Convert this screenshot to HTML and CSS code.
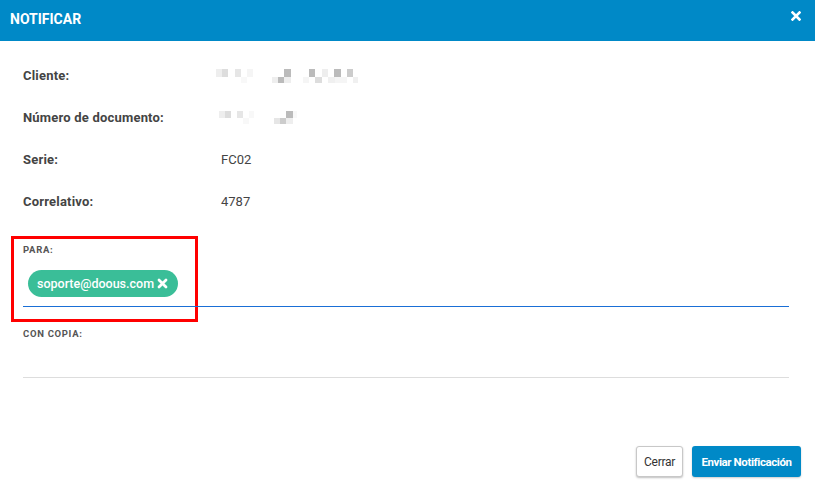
FILE: index.html
```html
<!DOCTYPE html>
<html lang="es">

<head>
    <meta charset="UTF-8">
    <meta name="viewport" content="width=device-width, initial-scale=1.0">
    <title>Notificar</title>
    <link rel="stylesheet" href="styles.css">
</head>

<body>
    <div class="modal">
        <div class="modal-header">
            <h4 class="modal-title">NOTIFICAR</h4>
            <span class="close">
                <svg width="10" height="10" viewBox="0 0 10 10">
                    <path d="M1.5 1.5 L8.5 8.5 M8.5 1.5 L1.5 8.5" stroke="#fff" stroke-width="2.6" stroke-linecap="square"/>
                </svg>
            </span>
        </div>

        <div class="modal-body">
            <div class="info">
                <div class="info-row">
                    <span class="info-label">Cliente:</span>
                    <span class="info-value">
                        <!-- nombre del cliente pixelado -->
                        <svg class="masked masked-client" width="150" height="18" viewBox="0 0 150 18">
                            <rect x="6" y="3" width="6" height="8" fill="#eeeeee"/>
                            <rect x="12" y="3" width="6" height="8" fill="#dddddd"/>
                            <rect x="25" y="3" width="6" height="8" fill="#e6e6e6"/>
                            <rect x="37" y="3" width="6" height="8" fill="#f5f5f5"/>
                            <rect x="31" y="11" width="6" height="6" fill="#f8f8f8"/>
                            <rect x="74" y="3" width="7" height="8" fill="#bbbbbb"/>
                            <rect x="62" y="11" width="6" height="6" fill="#eeeeee"/>
                            <rect x="68" y="11" width="6" height="6" fill="#bbbbbb"/>
                            <rect x="74" y="11" width="7" height="6" fill="#eeeeee"/>
                            <rect x="99" y="3" width="6" height="8" fill="#bbbbbb"/>
                            <rect x="112" y="3" width="6" height="8" fill="#eeeeee"/>
                            <rect x="124" y="3" width="7" height="8" fill="#bbbbbb"/>
                            <rect x="137" y="3" width="6" height="8" fill="#cccccc"/>
                            <rect x="93" y="11" width="6" height="6" fill="#f5f5f5"/>
                            <rect x="105" y="11" width="7" height="6" fill="#dddddd"/>
                            <rect x="118" y="11" width="7" height="6" fill="#f0f0f0"/>
                            <rect x="125" y="11" width="12" height="6" fill="#f5f5f5"/>
                            <rect x="143" y="11" width="5" height="6" fill="#f0f0f0"/>
                        </svg>
                    </span>
                </div>
                <div class="info-row">
                    <span class="info-label">Número de documento:</span>
                    <span class="info-value">
                        <svg class="masked masked-doc" width="90" height="18" viewBox="0 0 90 18">
                            <rect x="0" y="3" width="6" height="7" fill="#eeeeee"/>
                            <rect x="6" y="3" width="6" height="7" fill="#dddddd"/>
                            <rect x="18" y="3" width="6" height="7" fill="#e6e6e6"/>
                            <rect x="30" y="3" width="5" height="7" fill="#f8f8f8"/>
                            <rect x="24" y="10" width="6" height="6" fill="#f8f8f8"/>
                            <rect x="67" y="3" width="7" height="7" fill="#bbbbbb"/>
                            <rect x="74" y="3" width="4" height="7" fill="#f8f8f8"/>
                            <rect x="55" y="10" width="6" height="6" fill="#e6e6e6"/>
                            <rect x="61" y="10" width="6" height="6" fill="#cccccc"/>
                            <rect x="67" y="10" width="7" height="6" fill="#eeeeee"/>
                        </svg>
                    </span>
                </div>
                <div class="info-row">
                    <span class="info-label">Serie:</span>
                    <span class="info-value">FC02</span>
                </div>
                <div class="info-row">
                    <span class="info-label">Correlativo:</span>
                    <span class="info-value">4787</span>
                </div>
            </div>

            <div class="field field-active">
                <label class="field-label">PARA:</label>
                <div class="tags">
                    <span class="tag">soporte@doous.com
                        <svg width="11" height="11" viewBox="0 0 11 11">
                            <path d="M2 2 L9 9 M9 2 L2 9" stroke="#fff" stroke-width="2.8" stroke-linecap="round"/>
                        </svg>
                    </span>
                </div>
                <span class="highlight"></span>
            </div>

            <div class="field field-cc">
                <label class="field-label">CON COPIA:</label>
                <div class="tags"></div>
            </div>
        </div>

        <div class="modal-footer">
            <button class="btn btn-default">Cerrar</button>
            <button class="btn btn-primary">Enviar Notificación</button>
        </div>
    </div>
</body>

</html>
```

FILE: styles.css
```css
* {
    margin: 0;
    padding: 0;
    box-sizing: border-box;
}

body {
    font-family: Roboto, "Liberation Sans", sans-serif;
    background: #fff;
    color: #444;
}

.modal {
    width: 815px;
    height: 485px;
    display: flex;
    flex-direction: column;
}

.modal-header {
    height: 41px;
    background: #0089c7;
    color: #fff;
    display: flex;
    align-items: center;
    justify-content: space-between;
    padding: 0 14px 3px 10px;
}

.modal-title {
    font-size: 14px;
    font-weight: 700;
}

.close {
    display: flex;
    margin-top: -6px;
    cursor: pointer;
}

.modal-body {
    flex: 1;
    padding: 13px 26px 0 23px;
}

.info-row {
    display: flex;
    height: 42px;
    align-items: center;
    font-size: 13px;
}

.info-label {
    width: 198px;
    font-weight: 700;
    letter-spacing: 0.2px;
    color: #444;
}

.info-value {
    color: #444;
    display: flex;
}

.masked {
    display: block;
}

.masked-client {
    margin-left: -11px;
}

.masked-doc {
    margin-left: -2px;
}

.field {
    position: relative;
    margin-top: 22px;
    height: 63px;
}

/* recuadro rojo alrededor del destinatario */
.field-active::before {
    content: "";
    position: absolute;
    left: -12px;
    top: -8px;
    width: 187px;
    height: 86px;
    box-sizing: border-box;
    border: 3px solid #ff0000;
}

.field-cc {
    margin-top: 21px;
    height: 50px;
    border-bottom: 1px solid #dddddd;
}

.field-label {
    display: block;
    font-size: 9.5px;
    font-weight: 700;
    letter-spacing: 0.7px;
    color: #555;
}

.tags {
    display: flex;
    padding: 15px 0 0 5px;
}

.tag {
    display: inline-flex;
    align-items: center;
    gap: 3px;
    height: 27px;
    padding: 0 10px 0 9px;
    border-radius: 14px;
    background: #3abe98;
    color: #fff;
    font-size: 12.5px;
    font-weight: 500;
}

.highlight {
    position: absolute;
    left: 0;
    right: 0;
    bottom: 0;
    height: 1px;
    background: #1a6fd6;
}

.modal-footer {
    display: flex;
    justify-content: flex-end;
    gap: 9px;
    padding: 0 14px 8px 0;
}

.btn {
    height: 31px;
    font-family: Roboto, "Liberation Sans", sans-serif;
    font-size: 12px;
    border-radius: 3px;
    cursor: pointer;
    letter-spacing: -0.3px;
}

.btn-default {
    width: 47px;
    background: #fff;
    color: #333;
    border: 1px solid #c8c8c8;
    box-shadow: 0 1px 2px rgba(0, 0, 0, 0.25);
}

.btn-primary {
    width: 109px;
    background: #0089c7;
    color: #fff;
    font-size: 11.5px;
    font-weight: 700;
    letter-spacing: -0.4px;
    border: none;
    box-shadow: 0 1px 2px rgba(0, 0, 0, 0.2);
}
```
